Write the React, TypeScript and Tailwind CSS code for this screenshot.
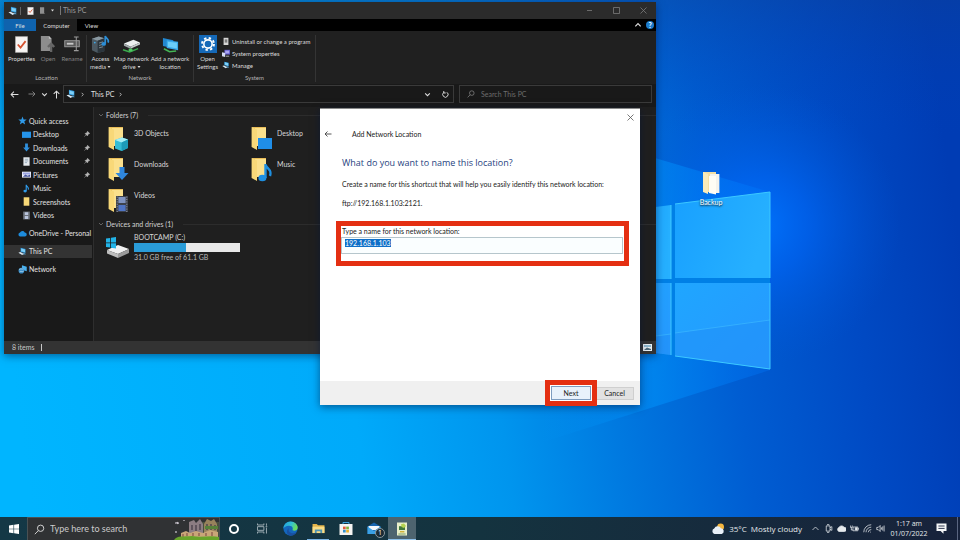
import { useEffect, useRef, type ReactNode } from "react";

/* ---------- small shared drawings ---------- */

function PcIcon({ className = "size-[11px]" }: { className?: string }) {
  return (
    <svg viewBox="0 0 24 24" className={className} aria-hidden="true">
      <path d="M7 2 L20 5 L20 16 L7 13 Z" fill="#2f9be0" />
      <path d="M8.5 4 L18.6 6.4 L18.6 14 L8.5 11.5 Z" fill="#7fd0f7" />
      <path d="M13 15 L19 16.5 L21 20 L14 20 Z" fill="#4e8fb8" />
      <path d="M1 15 L6 13.5 L16 18.5 L11 21.5 Z" fill="#d8e8f2" />
    </svg>
  );
}

function Chevron({ dir, className = "size-[7px]" }: { dir: "up" | "down" | "right"; className?: string }) {
  const d = dir === "up" ? "M2 8 L6 4 L10 8" : dir === "down" ? "M2 4 L6 8 L10 4" : "M4 2 L8 6 L4 10";
  return (
    <svg viewBox="0 0 12 12" className={className} fill="none" stroke="currentColor" strokeWidth="1.8" aria-hidden="true">
      <path d={d} />
    </svg>
  );
}

function Arrow({ dir, className = "size-[9px]" }: { dir: "left" | "right" | "up"; className?: string }) {
  const d =
    dir === "left"
      ? "M15 8 H2 M7 3 L2 8 L7 13"
      : dir === "right"
        ? "M1 8 H14 M9 3 L14 8 L9 13"
        : "M8 15 V2 M3 7 L8 2 L13 7";
  return (
    <svg viewBox="0 0 16 16" className={className} fill="none" stroke="currentColor" strokeWidth="1.8" aria-hidden="true">
      <path d={d} />
    </svg>
  );
}

function Magnifier({ className }: { className: string }) {
  return (
    <svg viewBox="0 0 16 16" className={className} fill="none" stroke="currentColor" strokeWidth="1.4" aria-hidden="true">
      <circle cx="9.6" cy="6.2" r="4.6" />
      <path d="M6.3 9.6 L1.2 14.8" />
    </svg>
  );
}

function CheckPage({ className }: { className: string }) {
  return (
    <svg viewBox="0 0 14 18" className={className} aria-hidden="true">
      <path d="M0.5 0.5 H13.5 V17.5 H0.5 Z" fill="#f7f5f4" stroke="#b9b6b5" strokeWidth="0.6" />
      <path d="M3 9 L6 12.4 L11.4 5.4" fill="none" stroke="#d4512f" strokeWidth="1.9" />
    </svg>
  );
}

/* ---------- wallpaper ---------- */

function Wallpaper() {
  return (
    <svg
      viewBox="0 0 960 540"
      preserveAspectRatio="none"
      className="absolute inset-0 size-full"
      aria-hidden="true"
    >
      <defs>
        <linearGradient id="base" x1="0" y1="0.54" x2="1" y2="0.46">
          <stop offset="0" stopColor="#00b5ff" />
          <stop offset="0.35" stopColor="#00aafa" />
          <stop offset="0.5" stopColor="#0095ee" />
          <stop offset="0.62" stopColor="#0079e0" />
          <stop offset="0.75" stopColor="#005dd2" />
          <stop offset="0.88" stopColor="#004ac4" />
          <stop offset="1" stopColor="#003cb4" />
        </linearGradient>
        <linearGradient id="topShade" x1="0" y1="0" x2="0" y2="1">
          <stop offset="0" stopColor="#0d3f95" stopOpacity="0.4" />
          <stop offset="0.25" stopColor="#0044bb" stopOpacity="0" />
        </linearGradient>
        <radialGradient id="glow" gradientUnits="userSpaceOnUse" cx="760" cy="225" r="140">
          <stop offset="0" stopColor="#0074ff" stopOpacity="0.9" />
          <stop offset="0.35" stopColor="#0068fa" stopOpacity="0.6" />
          <stop offset="1" stopColor="#0058d8" stopOpacity="0" />
        </radialGradient>
        <linearGradient id="beam" x1="0" y1="0" x2="1" y2="0">
          <stop offset="0" stopColor="#0098f8" stopOpacity="0" />
          <stop offset="0.5" stopColor="#0092fa" stopOpacity="0.55" />
          <stop offset="1" stopColor="#0078ff" stopOpacity="0.3" />
        </linearGradient>
        <linearGradient id="pane" x1="0" y1="0" x2="1" y2="0.3">
          <stop offset="0" stopColor="#18a0ff" />
          <stop offset="1" stopColor="#26b0ff" />
        </linearGradient>
        <linearGradient id="paneLow" x1="0" y1="0" x2="1" y2="1">
          <stop offset="0" stopColor="#1fa6ff" />
          <stop offset="1" stopColor="#2798ff" />
        </linearGradient>
      </defs>
      <rect width="960" height="540" fill="url(#base)" />
      <rect width="960" height="540" fill="url(#topShade)" />
      <rect x="560" width="400" height="540" fill="url(#glow)" />
      <path d="M540 124 L770 192 L770 370 L540 443 Z" fill="url(#beam)" />
      <path d="M600 215 L770 192 L770 369 L600 346 Z" fill="#0080e6" />
      <path d="M640 209 L671 205 V279 H640 Z" fill="url(#pane)" />
      <path d="M675 204 L770 192 V278 H675 Z" fill="url(#pane)" />
      <path d="M640 283 H671 V355 L640 351 Z" fill="url(#paneLow)" />
      <path d="M675 283 H770 V369 L675 356 Z" fill="url(#paneLow)" />
      <path d="M675 333 L770 320 V369 L675 356 Z" fill="#2090f8" opacity="0.55" />
      <path d="M640 338 L671 334 V355 L640 351 Z" fill="#2090f8" opacity="0.55" />
      <path d="M675 333 L770 320 M640 338 L671 334" fill="none" stroke="#3cb8ff" strokeWidth="1" opacity="0.7" />
      <path d="M675 204 L770 192 V278 M770 283 V369 L675 356 M671 205 V279 M671 283 V355" fill="none" stroke="#3cc8ff" strokeWidth="1" />
    </svg>
  );
}

/* ---------- explorer: ribbon ---------- */

const bigIcons: Record<string, ReactNode> = {
  properties: <CheckPage className="h-[17px] w-[13px]" />,
  open: (
    <svg viewBox="0 0 18 20" className="h-[18px] w-[16px]" aria-hidden="true">
      <path d="M1 1 H10 L13 4 V18 H1 Z" fill="#8d8d8d" />
      <path d="M10 1 L13 4 H10 Z" fill="#c4c4c4" />
      <path d="M12.5 19 V10 M9 13.4 L12.5 9.6 L16 13.4" fill="none" stroke="#666" strokeWidth="2.6" />
    </svg>
  ),
  rename: (
    <svg viewBox="0 0 18 18" className="h-[18px] w-[17px]" fill="none" aria-hidden="true">
      <rect x="0.8" y="5.5" width="15.4" height="6.4" fill="#5b5b5b" stroke="#9a9a9a" strokeWidth="1" />
      <path d="M3 8.7 H10" stroke="#c8c8c8" strokeWidth="2" />
      <path d="M10.5 1.5 H15.5 M13 1.5 V16 M10.5 16 H15.5" stroke="#9a9a9a" strokeWidth="1.1" />
    </svg>
  ),
  media: (
    <svg viewBox="0 0 20 20" className="size-[19px]" aria-hidden="true">
      <path d="M1 4 L8 1.5 L14 3.5 V17 L7 19 L1 16 Z" fill="#4c5962" />
      <path d="M1 4 L8 1.5 L14 3.5 L7 6 Z" fill="#8998a1" />
      <path d="M7 6 L14 3.5 V17 L7 19 Z" fill="#2b353c" />
      <circle cx="4" cy="8" r="1" fill="#3fa7e4" />
      <path d="M8.5 8.5 L12.6 7.2 M8.5 11 L12.6 9.8 M8.5 13.5 L12.6 12.4" stroke="#93a4ae" strokeWidth="0.8" />
      <path d="M15 9 V1 C15.5 4 19.5 4 18 8" fill="none" stroke="#2c8ed6" strokeWidth="1.8" />
      <ellipse cx="13.4" cy="9.4" rx="2.4" ry="2" fill="#2c8ed6" />
    </svg>
  ),
  map: (
    <svg viewBox="0 0 20 18" className="h-[17px] w-[19px]" aria-hidden="true">
      <path d="M2 8 L12 4 L19 7 L9 11.4 Z" fill="#ebefef" />
      <path d="M2 8 L9 11.4 V13.6 L2 10.4 Z" fill="#a3aaac" />
      <path d="M9 11.4 L19 7 V9 L9 13.6 Z" fill="#c5cbcc" />
      <path d="M1 14.5 L8 17 L17 13.4" fill="none" stroke="#3bab4e" strokeWidth="1.6" />
      <rect x="7" y="13.4" width="4" height="2.8" fill="#4dc661" />
    </svg>
  ),
  add: (
    <svg viewBox="0 0 20 18" className="h-[17px] w-[19px]" aria-hidden="true">
      <path d="M2 2 L13 4.5 V13 L2 10.5 Z" fill="#2287cf" />
      <path d="M6 4.5 L18 6 V15 L6 12.6 Z" fill="#39a9ea" />
      <path d="M7.2 6 L16.8 7.2 V13.3 L7.2 11.4 Z" fill="#6bcdf8" />
      <path d="M3 13.5 L9 16.6 L16 16" fill="none" stroke="#44b556" strokeWidth="1.6" />
    </svg>
  ),
  settings: (
    <svg viewBox="0 0 20 20" className="size-[18px]" aria-hidden="true">
      <rect width="20" height="20" fill="#1569b8" />
      <circle cx="10" cy="10" r="6.6" fill="none" stroke="#fff" strokeWidth="2.2" strokeDasharray="2.6 2.58" />
      <circle cx="10" cy="10" r="4.6" fill="none" stroke="#fff" strokeWidth="1.8" />
    </svg>
  ),
};

function RibbonButton({
  icon,
  lines,
  width,
  dim,
  drop,
}: {
  icon: string;
  lines: string[];
  width: string;
  dim?: boolean;
  drop?: boolean;
}) {
  return (
    <button
      type="button"
      className={`flex flex-col items-center gap-[2px] whitespace-nowrap text-center leading-[8px] ${width} ${dim ? "text-[#858585]" : "text-[#dcdcdc]"}`}
    >
      <span className="flex h-[18px] items-center">{bigIcons[icon]}</span>
      <span className="flex flex-col">
        {lines.map((line, i) => (
          <span key={line} className="flex items-center justify-center gap-px">
            {line}
            {drop && i === lines.length - 1 && (
              <svg viewBox="0 0 6 4" className="h-[2px] w-[4px]" aria-hidden="true">
                <path d="M0 0 H6 L3 4 Z" fill="currentColor" />
              </svg>
            )}
          </span>
        ))}
      </span>
    </button>
  );
}

function RibbonGroup({ name, className, children }: { name: string; className: string; children: ReactNode }) {
  return (
    <section aria-label={name} className={`flex flex-col justify-between border-r border-[#343434] ${className}`}>
      <div className="flex">{children}</div>
      <p className="text-center leading-[8px] text-[#b4b4b4]">{name}</p>
    </section>
  );
}

function Ribbon() {
  return (
    <div className="flex h-[53px] bg-[#202020] pt-[4px] pb-[2px] pl-[3px]">
      <RibbonGroup name="Location" className="w-[80px]">
        <RibbonButton icon="properties" lines={["Properties"]} width="w-[29px]" />
        <RibbonButton icon="open" lines={["Open"]} width="w-[24px]" dim />
        <RibbonButton icon="rename" lines={["Rename"]} width="w-[24px]" dim />
      </RibbonGroup>
      <RibbonGroup name="Network" className="w-[107px]">
        <RibbonButton icon="media" lines={["Access", "media"]} width="w-[27px]" drop />
        <RibbonButton icon="map" lines={["Map network", "drive"]} width="w-[35px]" drop />
        <RibbonButton icon="add" lines={["Add a network", "location"]} width="w-[42px]" />
      </RibbonGroup>
      <RibbonGroup name="System" className="w-[122px]">
        <RibbonButton icon="settings" lines={["Open", "Settings"]} width="w-[27px]" />
        <div className="flex flex-col pl-[1px] whitespace-nowrap text-[#dcdcdc]">
          <button type="button" className="flex h-[12px] items-center gap-[2px]">
            <svg viewBox="0 0 10 10" className="size-[8px]" aria-hidden="true">
              <rect x="2" y="1" width="6" height="9" fill="#d5d5d5" />
              <rect x="3.4" y="3" width="3.2" height="4" fill="#7a7a7a" />
            </svg>
            Uninstall or change a program
          </button>
          <button type="button" className="flex h-[12px] items-center gap-[2px]">
            <svg viewBox="0 0 10 10" className="size-[8px]" aria-hidden="true">
              <rect x="3" y="1" width="7" height="6" fill="#5d55c8" />
              <rect x="4" y="2" width="5" height="3.6" fill="#a9a5f2" />
              <path d="M0 4 L4 5 V10 L0 9 Z" fill="#d5dcf4" />
              <path d="M5 9 H9" stroke="#ccc" strokeWidth="1" />
            </svg>
            System properties
          </button>
          <button type="button" className="flex h-[12px] items-center gap-[2px]">
            <PcIcon className="size-[8px]" />
            Manage
          </button>
        </div>
      </RibbonGroup>
    </div>
  );
}

/* ---------- explorer: navigation ---------- */

const navIcons: Record<string, ReactNode> = {
  star: <path d="M8 1 L10 6 L15.4 6.3 L11.2 9.7 L12.7 15 L8 12 L3.3 15 L4.8 9.7 L0.6 6.3 L6 6 Z" fill="#2f9bea" />,
  desktop: <path d="M0 3 H16 V14 H0 Z" fill="#2594ea" />,
  download: <path d="M5.5 1 H10.5 V8 H14 L8 15 L2 8 H5.5 Z" fill="#2f8fdc" />,
  document: (
    <>
      <path d="M2.5 0.5 H13.5 V15.5 H2.5 Z" fill="#e6eaee" />
      <path d="M5 4 H11 M5 7 H11 M5 10 H9" stroke="#7f98ad" strokeWidth="1.3" />
    </>
  ),
  picture: (
    <>
      <path d="M0 3 H16 V13.5 H0 Z" fill="#eef0fa" />
      <path d="M1.5 4.5 H14.5 V8 H1.5 Z" fill="#9ba4e2" />
      <path d="M1.5 12 L6 8 L10 10 L14.5 8 V12 Z" fill="#44519b" />
    </>
  ),
  music: (
    <>
      <path d="M7.5 12 V1.5 C8 5 13 5 11.2 10" fill="none" stroke="#2f9bea" strokeWidth="2" />
      <ellipse cx="5.5" cy="12.5" rx="3" ry="2.4" fill="#2f9bea" />
    </>
  ),
  folder: <path d="M3 0.5 H13 V15.5 H3 Z" fill="#f7d877" />,
  video: (
    <>
      <path d="M2 1 H14 V15 H2 Z" fill="#6b7078" />
      <path d="M5 2 H11 V7 H5 Z M5 9 H11 V14 H5 Z" fill="#b9c4dc" />
    </>
  ),
  cloud: <path d="M4 13.5 A3.6 3.6 0 0 1 3.6 6.4 A4.8 4.8 0 0 1 12 6 A3.8 3.8 0 0 1 12.6 13.5 Z" fill="#1d8bdc" />,
  network: (
    <>
      <path d="M7 0.5 L15.5 3 V11 L7 8.5 Z" fill="#4ab1ee" />
      <circle cx="6" cy="10" r="5" fill="#3d8fc9" />
      <path d="M2 8 C5 6 7 8 10 7 M3 12 C6 10 8 13 10 11" fill="none" stroke="#b8dcf0" strokeWidth="1.3" />
    </>
  ),
};

function NavIcon({ name }: { name: string }) {
  return (
    <svg viewBox="0 0 16 16" className="size-[9px] shrink-0" aria-hidden="true">
      {navIcons[name]}
    </svg>
  );
}

function Pin() {
  return (
    <svg viewBox="0 0 12 12" className="size-[6px]" aria-label="Pinned">
      <path d="M7 0.5 L11.5 5 L9.6 5.4 L7.4 8 L7 10 L2 5 L4 4.6 L6.6 2.4 Z M4.4 7.4 L0.8 11.2" fill="#b9b9b9" stroke="#b9b9b9" />
    </svg>
  );
}

const quickItems = [
  { icon: "desktop", name: "Desktop", pinned: true },
  { icon: "download", name: "Downloads", pinned: true },
  { icon: "document", name: "Documents", pinned: true },
  { icon: "picture", name: "Pictures", pinned: true },
  { icon: "music", name: "Music", pinned: false },
  { icon: "folder", name: "Screenshots", pinned: false },
  { icon: "video", name: "Videos", pinned: false },
];

function NavPane() {
  return (
    <nav className="flex w-[90px] shrink-0 flex-col gap-[5px] border-r border-[#2e2e2e] bg-[#191919] pt-[7px] text-[7px] text-[#e2e2e2]">
      <ul className="grid h-[108px] grid-rows-8">
        <li className="flex items-center gap-[2px] pl-[14px]">
          <NavIcon name="star" />
          Quick access
        </li>
        {quickItems.map((item) => (
          <li key={item.name} className="flex items-center gap-[2px] pr-[3px] pl-[18px]">
            <NavIcon name={item.icon} />
            <span className="flex-1">{item.name}</span>
            {item.pinned && <Pin />}
          </li>
        ))}
      </ul>
      <div className="flex h-[13px] items-center gap-[2px] pl-[14px] whitespace-nowrap">
        <NavIcon name="cloud" />
        OneDrive - Personal
      </div>
      <div className="mr-[1px] flex h-[13px] items-center gap-[2px] bg-[#333333] pl-[14px]">
        <PcIcon className="size-[9px]" />
        This PC
      </div>
      <div className="flex h-[13px] items-center gap-[2px] pl-[14px]">
        <NavIcon name="network" />
        Network
      </div>
    </nav>
  );
}

/* ---------- explorer: content ---------- */

const overlays: Record<string, ReactNode> = {
  cube: (
    <>
      <path d="M8 14 L15 11.5 L21 13.5 V22 L14.6 25 L8 22.4 Z" fill="#35bcd4" />
      <path d="M8 14 L15 11.5 L21 13.5 L14.6 16.4 Z" fill="#a4eef5" />
      <path d="M14.6 16.4 L21 13.5 V22 L14.6 25 Z" fill="#1c9bb8" />
    </>
  ),
  desktop: <path d="M8 12 H22 V23 H8 Z" fill="#1f8ee8" />,
  download: <path d="M12.5 10 H17.5 V16 H21.5 L15 23 L8.5 16 H12.5 Z" fill="#2f86dc" />,
  music: (
    <>
      <path d="M15.5 21 V7 C16 12 22.5 12 20 19" fill="none" stroke="#1e8fe0" strokeWidth="2.4" />
      <ellipse cx="12.4" cy="21" rx="4" ry="3.2" fill="#1e8fe0" />
    </>
  ),
  video: (
    <>
      <path d="M9 8 H21 V24 H9 Z" fill="#3d424c" />
      <path d="M11.4 9 H18.6 V15 H11.4 Z" fill="#7f93c0" />
      <path d="M11.4 17 H18.6 V23 H11.4 Z" fill="#4f74c4" />
      <path d="M10.2 8.6 V24 M19.8 8.6 V24" stroke="#aab" strokeWidth="0.8" strokeDasharray="1 1.4" />
    </>
  ),
};

function FolderTile({ overlay, name }: { overlay: string; name: string }) {
  return (
    <li className="flex h-[31px] gap-[3px]">
      <svg viewBox="0 0 24 26" className="h-[26px] w-[24px]" aria-hidden="true">
        <path d="M2 1 H16 V20 H5 Z" fill="#e9bd58" />
        <path d="M5 2 H16 V20 H5 Z" fill="#fbe08c" />
        <path d="M1.6 1 L7 3.6 V24 L1.6 21 Z" fill="#f8d878" />
        {overlays[overlay]}
      </svg>
      <span className="leading-[14px]">{name}</span>
    </li>
  );
}

const folders = [
  { overlay: "cube", name: "3D Objects" },
  { overlay: "desktop", name: "Desktop" },
  { overlay: "download", name: "Downloads" },
  { overlay: "music", name: "Music" },
  { overlay: "video", name: "Videos" },
];

function SectionHeader({ children }: { children: ReactNode }) {
  return (
    <h2 className="flex h-[12px] items-center gap-[2px] text-[#d2d2d2]">
      <Chevron dir="down" className="size-[6px] text-[#6a6a6a]" />
      {children}
      <span className="ml-[8px] h-px flex-1 bg-[#2c2c2c]" />
    </h2>
  );
}

function Content() {
  return (
    <main className="min-w-0 flex-1 bg-[#1f1f1f] pt-[2px] pl-[4px] text-[7px] text-[#d8d8d8]">
      <SectionHeader>Folders (7)</SectionHeader>
      <ul className="grid h-[97px] grid-cols-[143px_143px] pt-[5px] pl-[9px]">
        {folders.map((f) => (
          <FolderTile key={f.name} overlay={f.overlay} name={f.name} />
        ))}
      </ul>
      <SectionHeader>Devices and drives (1)</SectionHeader>
      <div className="flex gap-[4px] pt-[3px] pl-[7px]">
        <svg viewBox="0 0 25 26" className="h-[26px] w-[25px]" aria-hidden="true">
          <path d="M2 17 L13 12 L24 16 L13 21 Z" fill="#f1f1f1" />
          <path d="M2 17 L13 21 V25 L2 20.4 Z" fill="#bdbdbd" />
          <path d="M13 21 L24 16 V20 L13 25 Z" fill="#9b9b9b" />
          <path d="M1 5.6 L5.2 5 V9.4 H1 Z M6 4.8 L11 4 V9.4 H6 Z M1 10.2 H5.2 V14.6 L1 14 Z M6 10.2 H11 V15.4 L6 14.8 Z" fill="#22b4e8" />
        </svg>
        <div className="flex w-[106px] flex-col leading-[9px]">
          <span id="drive">BOOTCAMP (C:)</span>
          <div role="meter" aria-labelledby="drive" aria-valuenow={49} className="my-[1px] flex h-[9px] bg-[#e8e8e8]">
            <div className="w-[49%] bg-[#2a9cd8]" />
          </div>
          <span className="text-[#b9b9b9]">31.0 GB free of 61.1 GB</span>
        </div>
      </div>
    </main>
  );
}

/* ---------- explorer window ---------- */

function Explorer() {
  return (
    <div className="absolute top-[2px] left-[4px] flex h-[352px] w-[652px] flex-col bg-[#202020] font-['Lato','Open_Sans',sans-serif] text-[6px] shadow-[0_2px_8px_rgba(0,20,60,0.5)]">
      <header className="flex h-[17px] shrink-0 items-center bg-[#2b2b2b] pl-[4px] text-[#9a9a9a]">
        <PcIcon className="size-[10px]" />
        <span className="ml-[2px] h-[8px] w-px bg-[#666]" />
        <button type="button" aria-label="Properties" className="ml-[6px]">
          <CheckPage className="h-[8px] w-[7px]" />
        </button>
        <button type="button" aria-label="New folder" className="ml-[6px]">
          <svg viewBox="0 0 6 8" className="h-[7px] w-[5px]" aria-hidden="true">
            <path d="M0 0 H5 V7 L6 8 H0 Z" fill="#8f8f8f" />
          </svg>
        </button>
        <button type="button" aria-label="Customize toolbar" className="ml-[6px]">
          <svg viewBox="0 0 6 6" className="size-[3px]" aria-hidden="true">
            <path d="M0 1 H6 L3 5 Z" fill="#ddd" />
          </svg>
        </button>
        <span className="mr-[2px] ml-[6px] h-[9px] w-px bg-[#777]" />
        <h1 className="text-[7px]">This PC</h1>
        <div className="ml-auto flex gap-[20px] pr-[9px] text-[#7b7b7b]">
          <button type="button" aria-label="Minimize">
            <svg viewBox="0 0 7 7" className="size-[7px]" stroke="currentColor" strokeWidth="0.8" fill="none"><path d="M1 3.5 H6" /></svg>
          </button>
          <button type="button" aria-label="Maximize">
            <svg viewBox="0 0 7 7" className="size-[7px]" stroke="currentColor" strokeWidth="0.8" fill="none"><path d="M0.5 0.5 H6.5 V6.5 H0.5 Z" /></svg>
          </button>
          <button type="button" aria-label="Close">
            <svg viewBox="0 0 7 7" className="size-[7px]" stroke="currentColor" strokeWidth="0.8" fill="none"><path d="M0.5 0.5 L6.5 6.5 M6.5 0.5 L0.5 6.5" /></svg>
          </button>
        </div>
      </header>

      <div className="flex h-[12px] shrink-0 items-stretch bg-black text-[#dedede]">
        <button type="button" className="w-[32px] bg-[#0f63ae]">File</button>
        <button type="button" className="w-[41px] bg-[#202020]">Computer</button>
        <button type="button" className="w-[29px]">View</button>
        <div className="ml-auto flex items-center gap-[4px] pr-[2px]">
          <button type="button" aria-label="Collapse ribbon"><Chevron dir="up" className="size-[8px]" /></button>
          <button type="button" aria-label="Help" className="flex size-[8px] items-center justify-center rounded-full bg-[#1d7ccc] text-[7px] font-bold text-white">
            ?
          </button>
        </div>
      </div>

      <Ribbon />

      <div className="flex h-[20px] shrink-0 items-center bg-[#191919] pr-[4px] pl-[6px] text-[#e0e0e0]">
        <button type="button" aria-label="Back"><Arrow dir="left" /></button>
        <button type="button" aria-label="Forward" className="ml-[9px] text-[#8a8a8a]"><Arrow dir="right" className="size-[8px]" /></button>
        <button type="button" aria-label="Recent" className="ml-[5px]"><Chevron dir="down" /></button>
        <button type="button" aria-label="Up" className="ml-[4px]"><Arrow dir="up" /></button>
        <div className="ml-[2px] flex h-[18px] flex-1 items-center gap-[4px] border border-[#3a3a3a] px-[2px]">
          <PcIcon className="size-[10px]" />
          <Chevron dir="right" className="size-[5px]" />
          <span className="pl-[2px] text-[7px]">This PC</span>
          <Chevron dir="right" className="size-[5px]" />
          <button type="button" aria-label="History" className="mr-[7px] ml-auto"><Chevron dir="down" /></button>
          <button type="button" aria-label="Refresh" className="mr-[2px]">
            <svg viewBox="0 0 12 12" className="size-[7px]" fill="none" stroke="currentColor" strokeWidth="1.6" aria-hidden="true">
              <path d="M3 2.4 A4.6 4.6 0 1 0 8.4 2.2 M3 0 V3.4 H6.4" />
            </svg>
          </button>
        </div>
        <label className="ml-[5px] flex h-[18px] w-[193px] items-center gap-[6px] border border-[#3a3a3a] pl-[7px] text-[#8c8c8c]">
          <Magnifier className="size-[8px]" />
          <input
            type="search"
            aria-label="Search This PC"
            placeholder="Search This PC"
            className="min-w-0 flex-1 bg-transparent text-[7px] outline-none placeholder:text-[#6c6c6c]"
          />
        </label>
      </div>

      <div className="flex min-h-0 flex-1 border-t-[3px] border-[#191919]">
        <NavPane />
        <Content />
      </div>

      <footer className="flex h-[13px] shrink-0 items-center bg-[#333] pr-[4px] pl-[8px] text-[7px] text-[#c8c8c8]">
        8 items
        <span className="ml-[6px] h-[7px] w-px bg-[#c8c8c8]" />
        <button type="button" aria-label="Large icons view" className="ml-auto">
          <svg viewBox="0 0 9 7" className="h-[7px] w-[9px]" aria-hidden="true">
            <path d="M0 0 H9 V7 H0 Z" fill="#e8eef2" />
            <path d="M1 1 H8 V3 H1 Z" fill="#8db6cc" />
            <path d="M1 6 L4 3.6 L8 5 V6 Z" fill="#4b6878" />
          </svg>
        </button>
      </footer>
    </div>
  );
}

/* ---------- dialog ---------- */

function NetworkDialog() {
  const field = useRef<HTMLInputElement>(null);

  useEffect(() => {
    field.current?.focus();
    field.current?.select();
  }, []);

  return (
    <form
      role="dialog"
      aria-labelledby="dialog-title"
      onSubmit={(e) => e.preventDefault()}
      className="absolute top-[108px] left-[320px] flex h-[297px] w-[320px] flex-col border-t border-[#8a8a8a] bg-white font-['Lato','Open_Sans',sans-serif] text-[7px] text-[#222] shadow-[0_2px_8px_rgba(0,20,60,0.55)]"
    >
      <div className="flex justify-end pt-[5px] pr-[6px]">
        <button type="button" aria-label="Close" className="text-[#555]">
          <svg viewBox="0 0 7 7" className="size-[7px]" stroke="currentColor" strokeWidth="0.8" fill="none">
            <path d="M0.5 0.5 L6.5 6.5 M6.5 0.5 L0.5 6.5" />
          </svg>
        </button>
      </div>
      <div className="flex items-center gap-[20px] pt-[8px] pl-[4px]">
        <button type="button" aria-label="Back" className="text-[#444]">
          <Arrow dir="left" className="size-[8px]" />
        </button>
        <span id="dialog-title" className="leading-[10px]">Add Network Location</span>
      </div>
      <div className="flex flex-1 flex-col pr-[17px] pl-[22px] pt-[18px]">
        <h2 className="font-['Open_Sans',sans-serif] text-[9px] leading-[12px] text-[#1f3f80]">What do you want to name this location?</h2>
        <p className="mt-[10px] leading-[10px]">
          Create a name for this shortcut that will help you easily identify this network location:
        </p>
        <p className="mt-[9px] leading-[10px]">ftp://192.168.1.103:2121.</p>
        <div className="-mx-[1px] mt-[18px] flex h-[35px] flex-col bg-white pr-[1px] outline-[5px] outline-[#e42f12]">
          <label htmlFor="location-name" className="pl-[1px] leading-[11px]">Type a name for this network location:</label>
          <input
            id="location-name"
            ref={field}
            defaultValue="192.168.1.103"
            className="h-[17px] border border-[#b6c6cc] bg-[#fafeff] pb-[5px] pl-[3px] text-[7px] leading-[9px] outline-none selection:bg-[#0f6fc8] selection:text-white"
          />
        </div>
      </div>
      <div className="flex h-[24px] items-center justify-end gap-[4px] bg-[#f0f0f0] pr-[6px]">
        <button
          type="submit"
          className="z-10 h-[14px] w-[40px] border border-[#7d9cc0] bg-[#e8f1fb] ring-1 ring-white outline-[5px] outline-offset-1 outline-[#e42f12]"
        >
          Next
        </button>
        <button type="button" className="h-[13px] w-[39px] border border-[#cfcfcf] bg-[#e2e2e2]">Cancel</button>
      </div>
    </form>
  );
}

/* ---------- taskbar ---------- */

function Castle() {
  return (
    <svg viewBox="0 0 45 22" className="h-[22px] w-[45px]" aria-hidden="true">
      <path d="M14 22 C16 10 24 12 28 4 H45 V22 Z" fill="#49503f" />
      <path d="M15 4 L20 2 L22 5 L26 1 L29 6 V16 H15 Z" fill="#8c7d83" />
      <path d="M30 6 L33 1 L37 3 L40 1 L43 6 V16 H30 Z" fill="#97825c" />
      <path d="M18 7 V12 M22 7 V13 M26 6 V12 M33 6 V12 M37 6 V12 M41 7 V12" stroke="#4d434e" strokeWidth="1.4" />
      <path d="M31 8 H44 V11 H31 Z" fill="#56813a" />
      <path d="M7 15 L12 13 L16 15 L22 13 L29 15 L36 12 L44 14 V20 H7 Z" fill="#c9a678" />
      <path d="M9 16 V19 M13 15 V18 M19 15 V18 M25 15 V18 M32 15 V18 M38 14 V18" stroke="#8d5b4c" strokeWidth="1.3" />
      <path d="M0 22 C3 17 10 19 18 18 C28 20 36 17 45 19 V22 Z" fill="#68a52b" />
      <path d="M3 4 L4 6 M1 5 H5 M10 2 V3 M2 13 V15" stroke="#d9d4de" strokeWidth="1.1" />
    </svg>
  );
}

function TaskButton({ label, className = "", children }: { label: string; className?: string; children: ReactNode }) {
  return (
    <button type="button" aria-label={label} className={`flex w-[28px] items-center justify-center ${className}`}>
      {children}
    </button>
  );
}

function TrayIcon({ label, children }: { label: string; children: ReactNode }) {
  return (
    <button type="button" aria-label={label}>
      <svg viewBox="0 0 12 12" className="size-[9px]" fill="none" stroke="currentColor" strokeWidth="1">
        {children}
      </svg>
    </button>
  );
}

function Taskbar() {
  return (
    <footer className="relative flex h-[23px] items-stretch bg-linear-to-r from-[#143846] via-[#14333f] to-[#17223b] text-[#e6eaed]">
      <button type="button" aria-label="Start" className="flex w-[27px] items-center justify-center">
        <svg viewBox="0 0 10 10" className="size-[10px]" aria-hidden="true">
          <path d="M0 1.4 L4.5 0.8 V4.7 H0 Z M5.1 0.7 L10 0 V4.7 H5.1 Z M0 5.3 H4.5 V9.2 L0 8.6 Z M5.1 5.3 H10 V10 L5.1 9.3 Z" fill="#fff" />
        </svg>
      </button>
      <label className="flex w-[193px] items-center border border-b-0 border-[#4a5154] bg-[#303234] pl-[6px]">
        <Magnifier className="size-[11px] text-[#d4d4d4]" />
        <input
          type="search"
          aria-label="Search"
          placeholder="Type here to search"
          className="ml-[5px] min-w-0 flex-1 bg-transparent font-['Lato','Open_Sans',sans-serif] text-[9px] outline-none placeholder:text-[#cbcbcb]"
        />
        <Castle />
      </label>
      <TaskButton label="Cortana">
        <span className="size-[10px] rounded-full border-2 border-white" />
      </TaskButton>
      <TaskButton label="Task view">
        <svg viewBox="0 0 12 12" className="size-[11px]" fill="none" stroke="#b5c1c7" strokeWidth="0.9">
          <path d="M0.5 0.5 V2.2 H7.5 V0.5 M0.5 11.5 V9.8 H7.5 V11.5 M0.5 4 H7.5 V8 H0.5 Z M10.3 0.5 V3 M10.3 5 V11.5 M9.4 4 H11.2" />
        </svg>
      </TaskButton>
      <TaskButton label="Edge">
        <svg viewBox="0 0 16 16" className="size-[15px]">
          <defs>
            <linearGradient id="edgeTop" x1="0" y1="0" x2="1" y2="0.3">
              <stop offset="0" stopColor="#1d9fe0" />
              <stop offset="0.6" stopColor="#35c1d0" />
              <stop offset="1" stopColor="#6bdc5a" />
            </linearGradient>
          </defs>
          <circle cx="8" cy="8" r="7.6" fill="#1467bd" />
          <path d="M0.4 8 C0.6 3.6 4 0.4 8 0.4 C12.6 0.4 15.8 3.8 15.7 7 C15.6 9.8 13 10.8 10.8 10.2 C9.6 9.8 10.6 9 10.4 7.6 C10 5.6 8 4.8 6 5 C3.4 5.2 1.2 6.4 0.4 8 Z" fill="url(#edgeTop)" />
          <path d="M6.4 7.4 C5 10 7 13.4 11.6 13 C13 12.8 14 12 14.6 11.6 C13.4 14.4 10.6 15.8 8 15.6 C4 15 2.6 10 6.4 7.4 Z" fill="#1a4f9f" />
        </svg>
      </TaskButton>
      <TaskButton label="File Explorer" className="relative">
        <svg viewBox="0 0 14 12" className="h-[11px] w-[13px]">
          <path d="M0.5 1 H5 L6.5 2.5 H13.5 V11 H0.5 Z" fill="#e5b54a" />
          <path d="M0.5 4 H13.5 V11 H0.5 Z" fill="#f9dc85" />
          <path d="M3 7 H11 V11 H9 V9 H5 V11 H3 Z" fill="#4f95b4" />
        </svg>
        <span className="absolute inset-x-[3px] bottom-0 h-px bg-[#7cb6e6]" />
      </TaskButton>
      <TaskButton label="Store">
        <svg viewBox="0 0 14 14" className="size-[14px]">
          <path d="M4 2 V0.5 H10 V2" fill="none" stroke="#39a0dd" />
          <path d="M0.5 2 H13.5 V13 H0.5 Z" fill="#f4f4f2" />
          <path d="M4 4.6 H6.7 V7.3 H4 Z" fill="#e0583a" />
          <path d="M7.2 4.6 H9.9 V7.3 H7.2 Z" fill="#7db33b" />
          <path d="M4 7.8 H6.7 V10.5 H4 Z" fill="#3390cd" />
          <path d="M7.2 7.8 H9.9 V10.5 H7.2 Z" fill="#e5b02e" />
        </svg>
      </TaskButton>
      <TaskButton label="Mail, 1 new" className="relative">
        <svg viewBox="0 0 14 13" className="h-[13px] w-[14px]">
          <path d="M0.5 4.5 L7 0.5 L13.5 4.5 V12 H0.5 Z" fill="#1464ae" />
          <path d="M1.5 4 H12.5 V8 H1.5 Z" fill="#f2f7fb" />
          <path d="M0.5 4.5 L7 9 L13.5 4.5 V12 H0.5 Z" fill="#3aa1e6" />
        </svg>
        <span className="absolute right-[3px] bottom-[2px] flex size-[10px] items-center justify-center rounded-full border border-[#8a979e] bg-[#1a2b34] text-[7px] text-white">
          1
        </span>
      </TaskButton>
      <TaskButton label="Add Network Location" className="relative bg-[#4d646f]">
        <svg viewBox="0 0 12 14" className="h-[14px] w-[12px]">
          <path d="M1 0.5 H11 V13.5 H1 Z" fill="#e9efc9" />
          <path d="M3 4.2 H9 V8 H3 Z" fill="#437a3c" />
          <path d="M5 2.2 L8 1.4 L10 4 L8 6 L5.6 5 Z" fill="#b4d24e" />
          <path d="M4 9 H8.4 V10.5 H4 Z" fill="#d2b23a" />
          <path d="M2.4 12 H9.6" stroke="#7e9a60" />
        </svg>
        <span className="absolute inset-x-0 bottom-0 h-px bg-[#8cc0ea]" />
      </TaskButton>

      <div className="ml-auto flex items-center">
        <button type="button" className="flex items-center gap-[4px] text-[8px] whitespace-nowrap">
          <svg viewBox="0 0 14 12" className="h-[12px] w-[14px]" aria-hidden="true">
            <circle cx="9.6" cy="4" r="3.4" fill="#f4b63f" />
            <path d="M3.4 11 A3 3 0 0 1 3.2 5.4 A3.8 3.8 0 0 1 10 5.2 A3 3 0 0 1 10.8 11 Z" fill="#e8f0f8" />
          </svg>
          <span>35°C</span>
          <span>Mostly cloudy</span>
        </button>
        <div className="ml-[9px] flex items-center gap-[4px]">
          <TrayIcon label="Hidden icons"><path d="M2 8 L6 4 L10 8" /></TrayIcon>
          <TrayIcon label="Meet now"><path d="M3 2.5 H8 V9.5 H3 Z M8 5 L10.5 3.5 V8.5 L8 7 M4 0.8 H7 M4 11.2 H7" /></TrayIcon>
          <TrayIcon label="OneDrive">
            <path d="M2.6 10 A2.8 2.8 0 0 1 2.4 4.8 A4 4 0 0 1 9.4 4.4 A2.8 2.8 0 0 1 9.8 10 Z" fill="currentColor" />
          </TrayIcon>
          <TrayIcon label="Battery">
            <path d="M4 4 H10.5 V9 H4 Z M11.4 5.5 V7.5" />
            <path d="M7 5 H9.5 V8 H7 Z" fill="currentColor" />
            <path d="M0.5 2 V4.5 H3 V2 M1.8 4.5 V8 H4" />
          </TrayIcon>
          <TrayIcon label="Wi-Fi"><path d="M1 11 A10 10 0 0 1 11 1 M4 11 A7 7 0 0 1 11 4.2 M7 11 A4 4 0 0 1 11 7.4 M9.6 10.8 H10.6" /></TrayIcon>
          <TrayIcon label="Volume"><path d="M1 4.5 H3 L5.5 2 V10 L3 7.5 H1 Z M7.3 4.5 V7.5 M9 3.2 V8.8 M10.8 2 V10" /></TrayIcon>
        </div>
        <time dateTime="2022-07-01T01:17" className="ml-[5px] w-[38px] text-center text-[7px] leading-[10px] whitespace-nowrap">
          1:17 am
          <br />
          01/07/2022
        </time>
        <button type="button" aria-label="Notifications" className="ml-[8px]">
          <svg viewBox="0 0 11 11" className="size-[11px]">
            <path d="M0.5 0.5 H10.5 V8 H7.5 V10.8 L4.6 8 H0.5 Z" fill="#f4f6f8" />
            <path d="M2.4 3 H8.6 M2.4 5.4 H8.6" stroke="#1a2540" strokeWidth="0.9" />
          </svg>
        </button>
        <span className="mr-[2px] ml-[10px] h-[23px] w-px bg-[#5a6580]" />
      </div>
    </footer>
  );
}

/* ---------- desktop ---------- */

export default function App() {
  return (
    <div className="relative flex h-screen flex-col overflow-hidden font-['Open_Sans','Noto_Sans',sans-serif]">
      <Wallpaper />
      <div className="relative flex-1">
        <button type="button" className="absolute top-[171px] left-[690px] flex w-[42px] flex-col items-center gap-[2px] font-['Lato','Open_Sans',sans-serif] text-[7px] text-white">
          <svg viewBox="0 0 18 24" className="h-[24px] w-[18px]" aria-hidden="true">
            <path d="M1 1 H14 V21 H1 Z" fill="#f3dfa3" />
            <path d="M8 3 H17.4 V22 H8 Z" fill="#f5f3ec" />
            <path d="M1 1 L6 3 V23 L1 21 Z" fill="#f9ebba" />
            <path d="M7 5 H14 V23.4 L7 22 Z" fill="#fffdf4" />
          </svg>
          <span className="leading-[11px] [text-shadow:0_1px_2px_#000]">Backup</span>
        </button>
        <Explorer />
        <NetworkDialog />
      </div>
      <Taskbar />
    </div>
  );
}
